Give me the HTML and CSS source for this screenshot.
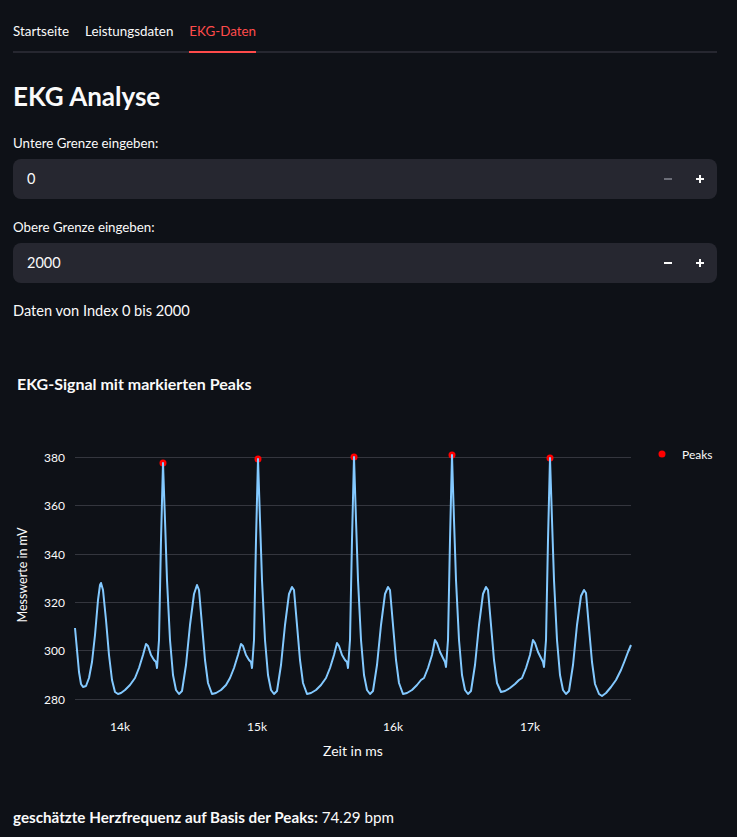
FILE: index.html
```html
<!DOCTYPE html>
<html lang="de">
<head>
<meta charset="utf-8">
<title>EKG Analyse</title>
<link rel="stylesheet" href="styles.css">
</head>
<body>
<div class="app">
  <nav class="tabs">
    <div class="tab">Startseite</div>
    <div class="tab">Leistungsdaten</div>
    <div class="tab active">EKG-Daten</div>
  </nav>

  <h1 class="title">EKG Analyse</h1>

  <div class="field">
    <label class="label">Untere Grenze eingeben:</label>
    <div class="numinput">
      <span class="value">0</span>
      <div class="steps">
        <span class="step disabled"><svg width="8" height="8" viewBox="0 0 8 8"><path d="M0 4H8" stroke="currentColor" stroke-width="2"/></svg></span>
        <span class="step"><svg width="8" height="8" viewBox="0 0 8 8"><path d="M0 4H8M4 0V8" stroke="currentColor" stroke-width="2"/></svg></span>
      </div>
    </div>
  </div>

  <div class="field field2">
    <label class="label">Obere Grenze eingeben:</label>
    <div class="numinput">
      <span class="value">2000</span>
      <div class="steps">
        <span class="step"><svg width="8" height="8" viewBox="0 0 8 8"><path d="M0 4H8" stroke="currentColor" stroke-width="2"/></svg></span>
        <span class="step"><svg width="8" height="8" viewBox="0 0 8 8"><path d="M0 4H8M4 0V8" stroke="currentColor" stroke-width="2"/></svg></span>
      </div>
    </div>
  </div>

  <p class="info">Daten von Index 0 bis 2000</p>

  <svg class="chart" width="704" height="450" viewBox="13 340 704 450">
    <text class="ctitle" x="17" y="390">EKG-Signal mit markierten Peaks</text>
    <g class="grid">
      <line x1="75" x2="631" y1="457.5" y2="457.5"/>
      <line x1="75" x2="631" y1="505.5" y2="505.5"/>
      <line x1="75" x2="631" y1="554.5" y2="554.5"/>
      <line x1="75" x2="631" y1="602.5" y2="602.5"/>
      <line x1="75" x2="631" y1="650.5" y2="650.5"/>
      <line x1="75" x2="631" y1="699.5" y2="699.5"/>
    </g>
    <g class="ytick">
      <text x="65" y="462">380</text>
      <text x="65" y="510">360</text>
      <text x="65" y="559">340</text>
      <text x="65" y="607">320</text>
      <text x="65" y="655">300</text>
      <text x="65" y="704">280</text>
    </g>
    <g class="xtick">
      <text x="120" y="731">14k</text>
      <text x="257" y="731">15k</text>
      <text x="393" y="731">16k</text>
      <text x="530" y="731">17k</text>
    </g>
    <text class="axtitle" x="353" y="756">Zeit in ms</text>
    <text class="axtitle ytitle" transform="translate(27 575) rotate(-90)">Messwerte in mV</text>
    <g class="peaks">
      <circle cx="163" cy="463" r="3.5"/>
      <circle cx="258" cy="459" r="3.5"/>
      <circle cx="354" cy="457" r="3.5"/>
      <circle cx="452" cy="455" r="3.5"/>
      <circle cx="550" cy="458" r="3.5"/>
    </g>
    <polyline class="signal" points="75,628 77,650 79,672 81,684 83,687 86,686 89,678 92,662 95,635 98,600 100,585 101,583 103,590 106,620 109,655 112,680 115,692 118,694 121,693 125,690 130,685 135,678 139,668 143,655 146,644 148,646 151,655 154,660 156,662 157,668 159,640 161,540 163,463 165,520 167,580 170,640 173,675 176,690 179,694 182,691 186,665 190,625 194,594 197,585 199,590 202,625 205,660 208,683 212,694 216,693 221,690 226,685 230,678 234,668 238,655 241,644 243,646 246,655 249,660 251,662 252,668 254,640 256,540 258,459 260,520 262,580 265,640 268,675 271,690 274,694 277,691 281,665 285,625 289,594 292,587 294,590 297,625 300,660 303,683 307,694 311,693 316,690 321,685 326,678 330,668 334,655 337,643 339,646 342,655 345,660 347,662 348,668 350,640 352,540 354,457 356,520 358,580 361,640 364,675 367,690 370,694 373,691 377,665 381,625 385,594 388,587 390,590 393,625 396,660 399,683 403,694 407,693 412,690 417,685 421,680 424,678 428,668 432,655 435,640 437,643 440,652 443,658 445,662 446,667 448,640 450,540 452,455 454,520 456,580 459,640 462,675 465,690 468,694 471,691 475,665 479,625 483,594 486,587 488,590 491,625 494,660 497,683 501,692 505,691 510,688 515,684 519,680 522,678 526,668 530,655 533,640 535,643 538,652 541,658 543,662 544,667 546,640 548,540 550,458 552,520 554,580 557,640 560,675 563,690 566,694 569,691 573,665 577,625 581,596 584,590 586,593 589,628 592,662 595,684 599,694 602,696 606,693 611,687 616,680 621,670 625,660 628,652 631,645"/>
    <circle class="legdot" cx="662" cy="454" r="3.5"/>
    <text class="legtext" x="682" y="459">Peaks</text>
  </svg>

  <p class="result"><strong>geschätzte Herzfrequenz auf Basis der Peaks:</strong> 74.29 bpm</p>
</div>
</body>
</html>
```

FILE: styles.css
```css
html, body {
  margin: 0;
  padding: 0;
  background: #0e1117;
}

body {
  color: #fafafa;
  font-family: Lato, "Open Sans", sans-serif;
}

.app {
  width: 704px;
  padding: 0 20px 0 13px;
}

.tabs {
  display: flex;
  gap: 16px;
  border-bottom: 2px solid #262730;
}

.tab {
  height: 53px;
  box-sizing: border-box;
  padding-top: 11px;
  display: flex;
  align-items: center;
  font-size: 13.4px;
  margin-bottom: -2px;
  border-bottom: 2px solid transparent;
}

.tab.active {
  color: #ff4b4b;
  border-bottom-color: #ff4b4b;
}

.title {
  margin: 26px 0 0;
  font-size: 26px;
  font-weight: 700;
  line-height: 34px;
}

.field {
  margin-top: 20px;
}

.field2 {
  margin-top: 18px;
}

.label {
  display: block;
  font-size: 13.3px;
  line-height: 20px;
  margin-bottom: 6px;
}

.numinput {
  height: 40px;
  box-sizing: border-box;
  background: #262730;
  border-radius: 8px;
  display: flex;
  align-items: center;
  justify-content: space-between;
  padding-left: 14px;
  padding-right: 1px;
}

.value {
  font-size: 14.5px;
  line-height: 24px;
}

.steps {
  display: flex;
}

.step {
  width: 32px;
  height: 38px;
  display: flex;
  align-items: center;
  justify-content: center;
  color: #fafafa;
}

.step.disabled {
  color: #6c6e78;
}

.info {
  margin: 16px 0 0;
  font-size: 14.6px;
  line-height: 24px;
}

.chart {
  display: block;
  margin-top: 17px;
}

.chart text {
  font-family: Lato, "Open Sans", sans-serif;
  fill: #fafafa;
}

.ctitle {
  font-size: 16px;
  font-weight: 700;
}

.grid line {
  stroke: #34363e;
  stroke-width: 1;
}

.ytick text {
  font-size: 12px;
  text-anchor: end;
}

.xtick text {
  font-size: 12px;
  text-anchor: middle;
}

.axtitle {
  font-size: 14px;
  text-anchor: middle;
}

.ytitle {
  font-size: 12.5px;
}

.signal {
  fill: none;
  stroke: #83c9ff;
  stroke-width: 2;
  stroke-linejoin: round;
}

.peaks circle,
.legdot {
  fill: #ff0000;
}

.legtext {
  font-size: 12px;
}

.result {
  margin: 15px 0 0;
  font-size: 15.2px;
  line-height: 24px;
}

.result strong {
  font-weight: 700;
}
```
